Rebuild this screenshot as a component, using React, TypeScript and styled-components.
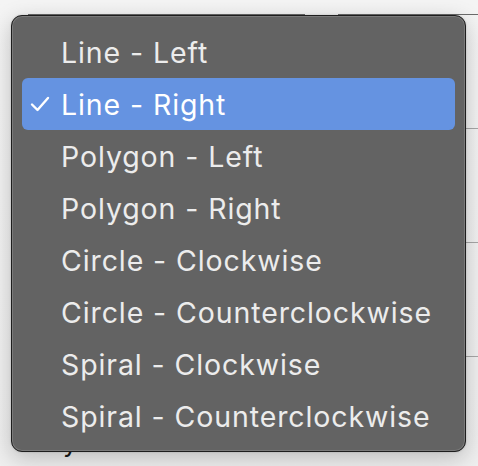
import styled, { createGlobalStyle } from "styled-components";

const options = [
  "Line - Left",
  "Line - Right",
  "Polygon - Left",
  "Polygon - Right",
  "Circle - Clockwise",
  "Circle - Counterclockwise",
  "Spiral - Clockwise",
  "Spiral - Counterclockwise",
];

const selected = 1;

const GlobalStyle = createGlobalStyle`
  html, body {
    margin: 0;
    padding: 0;
    background: #f3f3f3;
  }
  body {
    font-family: "Inter", "Noto Sans", sans-serif;
    -webkit-font-smoothing: antialiased;
  }
`;

const Page = styled.div`
  position: relative;
  width: 478px;
  height: 466px;
  overflow: hidden;
  background: linear-gradient(180deg, #f4f4f4 0%, #efefef 100%);
`;

const Backdrop = styled.div`
  display: flex;
  flex-direction: column;
  padding-top: 14px;
`;

const TopRule = styled.div`
  display: flex;
  height: 1px;
  padding-left: 28px;
  gap: 33px;
`;

const RuleSegment = styled.div<{ $w: number }>`
  width: ${(p) => p.$w}px;
  height: 1px;
  background: #6b6b6b;
  flex: ${(p) => (p.$w === 0 ? 1 : "none")};
`;

const SideRows = styled.div`
  display: flex;
  flex-direction: column;
  align-items: flex-end;
  margin-top: 113px;
  gap: 113px;
`;

const SideRule = styled.div`
  width: 14px;
  height: 1px;
  background: #a7a7a7;
`;

const HiddenLabel = styled.div`
  margin-top: 71px;
  padding-left: 63px;
  font-size: 26px;
  line-height: 30px;
  color: #1a1a1a;
`;

const Menu = styled.ul`
  position: absolute;
  left: 11px;
  top: 15px;
  width: 455px;
  height: 437px;
  box-sizing: border-box;
  margin: 0;
  padding: 10px 10px 12px;
  list-style: none;
  background: #636363;
  border-radius: 11px;
  border: 1px solid #1e1e1e;
  box-shadow: inset 0 0 0 1px #7a7a7a, 0 6px 22px rgba(0, 0, 0, 0.22),
    0 0 2px rgba(0, 0, 0, 0.2);
  display: flex;
  flex-direction: column;
`;

const Item = styled.li<{ $active: boolean }>`
  display: flex;
  align-items: center;
  height: 52px;
  flex: none;
  border-radius: 6px;
  padding-left: 8px;
  background: ${(p) => (p.$active ? "#6593e1" : "transparent")};
  color: ${(p) => (p.$active ? "#ffffff" : "#ececec")};
  font-size: 28.5px;
  letter-spacing: 0.9px;
`;

const Check = styled.span`
  width: 31px;
  flex: none;
  display: flex;
  align-items: center;
`;

const CheckMark = () => (
  <svg width="20" height="16" viewBox="0 0 20 16">
    <path
      d="M2 8.5 L7.5 14 L18 2"
      fill="none"
      stroke="#ffffff"
      strokeWidth="2.4"
      strokeLinecap="round"
      strokeLinejoin="round"
    />
  </svg>
);

export default function App() {
  return (
    <>
      <GlobalStyle />
      <Page>
        <Backdrop>
          <TopRule>
            <RuleSegment $w={277} />
            <RuleSegment $w={0} />
          </TopRule>
          <SideRows>
            <SideRule />
            <SideRule />
            <SideRule />
          </SideRows>
          <HiddenLabel>y</HiddenLabel>
        </Backdrop>
        <Menu>
          {options.map((label, i) => (
            <Item key={label} $active={i === selected}>
              <Check>{i === selected && <CheckMark />}</Check>
              {label}
            </Item>
          ))}
        </Menu>
      </Page>
    </>
  );
}
